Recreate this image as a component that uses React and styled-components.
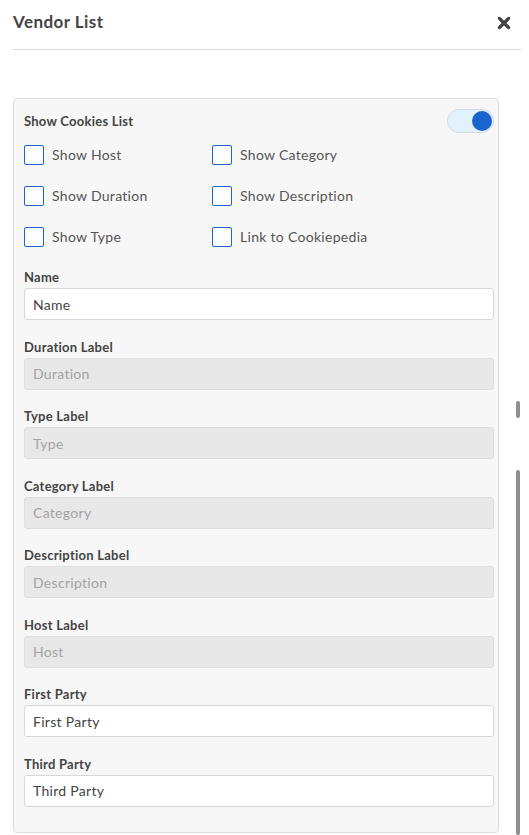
import * as React from 'react';
import styled, { createGlobalStyle } from 'styled-components';

const GlobalStyle = createGlobalStyle`
  html, body {
    margin: 0;
    padding: 0;
    background: #fff;
    font-family: Lato, 'Noto Sans', 'Liberation Sans', sans-serif;
    color: #3e3e3c;
  }
`;

const Page = styled.div`
  display: flex;
  width: 529px;
  height: 835px;
  overflow: hidden;
`;

const Main = styled.div`
  flex: 1;
  padding: 0 0 0 13px;
`;

const Header = styled.div`
  display: flex;
  align-items: center;
  justify-content: space-between;
  height: 49px;
  border-bottom: 1px solid #d9d9d9;
  margin-right: -5px;
`;

const Title = styled.h2`
  margin: 0 0 6px;
  font-size: 17px;
  font-weight: 700;
  color: #444;
  letter-spacing: 0.45px;
`;

const CloseButton = styled.button`
  border: 0;
  background: none;
  padding: 0;
  margin: 0 10px 4px 0;
  width: 14px;
  height: 14px;
  display: grid;
  place-items: center;
  cursor: pointer;
`;

const Panel = styled.div`
  margin-top: 48px;
  width: 486px;
  box-sizing: border-box;
  background: #f7f7f7;
  border: 1px solid #dcdcdc;
  border-radius: 4px;
  padding: 10px 4px 8px 10px;
`;

const PanelHead = styled.div`
  display: flex;
  align-items: center;
  justify-content: space-between;
  height: 24px;
`;

const PanelTitle = styled.span`
  font-size: 13px;
  font-weight: 700;
  color: #444;
  letter-spacing: 0.25px;
`;

const Toggle = styled.div`
  position: relative;
  width: 47px;
  height: 24px;
  box-sizing: border-box;
  border: 1px solid #d6dde5;
  border-radius: 12px;
  background: ${(props) => (props.on ? '#e3f1fd' : '#e9e9e9')};
`;

const Knob = styled.span`
  position: absolute;
  top: 1px;
  left: ${(props) => (props.on ? '24px' : '1px')};
  width: 20px;
  height: 20px;
  border-radius: 50%;
  background: #1a64cf;
`;

const Checks = styled.div`
  display: grid;
  grid-template-columns: 188px 1fr;
  row-gap: 21px;
  margin-top: 12px;
  margin-bottom: 21px;
`;

const CheckRow = styled.label`
  display: flex;
  align-items: center;
  gap: 8px;
  font-size: 14px;
  letter-spacing: 0.3px;
  color: #555;
  height: 20px;
  line-height: 18px;
`;

const Box = styled.span`
  width: 20px;
  height: 20px;
  box-sizing: border-box;
  border: 1px solid #1b64cc;
  border-radius: 2px;
  background: #fff;
  flex-shrink: 0;
`;

const Field = styled.div`
  margin-bottom: 17.5px;
`;

const Label = styled.div`
  font-size: 13px;
  font-weight: 700;
  color: #444;
  letter-spacing: 0.25px;
  line-height: 18px;
  margin-bottom: 2px;
`;

const Input = styled.div`
  height: 32px;
  box-sizing: border-box;
  border: 1px solid #d8d8d8;
  border-radius: 3px;
  padding: 0 8px;
  display: flex;
  align-items: center;
  font-size: 14px;
  letter-spacing: 0.3px;
  background: ${(props) => (props.disabled ? '#e8e8e8' : '#fff')};
  color: ${(props) => (props.disabled ? '#a3a3a3' : '#444')};
  border-color: ${(props) => (props.disabled ? '#dedede' : '#d8d8d8')};
`;

const Track = styled.div`
  width: 13px;
  display: flex;
  flex-direction: column;
  align-items: flex-start;
  padding-top: 401px;
  box-sizing: border-box;
`;

const Thumb = styled.div`
  width: 4px;
  border-radius: 2px;
  background: #8e8e8e;
  height: ${(props) => props.h}px;
  margin-bottom: ${(props) => props.gap || 0}px;
`;

const checks = [
  'Show Host',
  'Show Category',
  'Show Duration',
  'Show Description',
  'Show Type',
  'Link to Cookiepedia',
];

const fields = [
  { label: 'Name', value: 'Name' },
  { label: 'Duration Label', value: 'Duration', disabled: true },
  { label: 'Type Label', value: 'Type', disabled: true },
  { label: 'Category Label', value: 'Category', disabled: true },
  { label: 'Description Label', value: 'Description', disabled: true },
  { label: 'Host Label', value: 'Host', disabled: true },
  { label: 'First Party', value: 'First Party' },
  { label: 'Third Party', value: 'Third Party' },
];

const CloseIcon = () => (
  <svg width="14" height="14" viewBox="0 0 14 14">
    <path
      d="M2.5 2.5 L11.5 11.5 M11.5 2.5 L2.5 11.5"
      stroke="#444"
      strokeWidth="3.2"
      strokeLinecap="round"
    />
  </svg>
);

const App = () => (
  <>
    <GlobalStyle />
    <Page>
      <Main>
        <Header>
          <Title>Vendor List</Title>
          <CloseButton aria-label="Close">
            <CloseIcon />
          </CloseButton>
        </Header>
        <Panel>
          <PanelHead>
            <PanelTitle>Show Cookies List</PanelTitle>
            <Toggle on>
              <Knob on />
            </Toggle>
          </PanelHead>
          <Checks>
            {checks.map((c) => (
              <CheckRow key={c}>
                <Box />
                {c}
              </CheckRow>
            ))}
          </Checks>
          {fields.map((f) => (
            <Field key={f.label}>
              <Label>{f.label}</Label>
              <Input disabled={f.disabled}>{f.value}</Input>
            </Field>
          ))}
        </Panel>
      </Main>
      <Track>
        <Thumb h={17} gap={52} />
        <Thumb h={370} />
      </Track>
    </Page>
  </>
);

export default App;
